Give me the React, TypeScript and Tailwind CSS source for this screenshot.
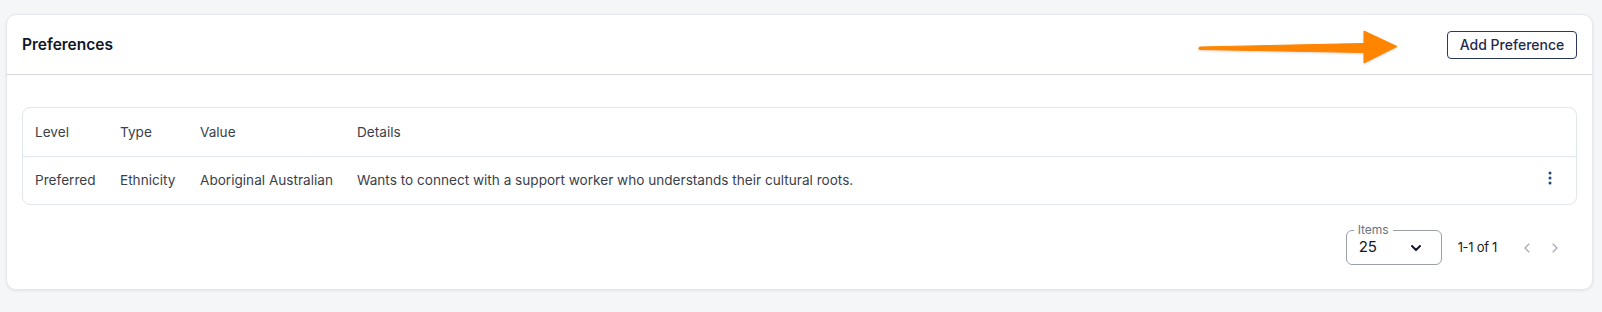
import { ChevronDown, ChevronLeft, ChevronRight } from "lucide-react";

const rows = [
  {
    level: "Preferred",
    type: "Ethnicity",
    value: "Aboriginal Australian",
    details: "Wants to connect with a support worker who understands their cultural roots.",
  },
];

function KebabIcon() {
  return (
    <svg width="4" height="14" viewBox="0 0 4 14" className="text-[#1d4a78]">
      <circle cx="2" cy="2" r="1.5" fill="currentColor" />
      <circle cx="2" cy="7" r="1.5" fill="currentColor" />
      <circle cx="2" cy="12" r="1.5" fill="currentColor" />
    </svg>
  );
}

function Arrow() {
  return (
    <svg
      width="204"
      height="38"
      viewBox="0 0 204 38"
      className="absolute left-[1190px] top-[14px] drop-shadow-[0_1px_1px_rgba(0,0,0,0.15)]"
    >
      <path
        d="M3 20.5 C1.5 20.5 1.5 18 3 18 L167 14.5 L167 2 L200 17.5 L167 34 L167 23.5 Z"
        fill="#ff8500"
        strokeLinejoin="round"
        stroke="#ff8500"
        strokeWidth="1"
      />
    </svg>
  );
}

export default function App() {
  return (
    <div className="w-full h-[312px] bg-[#f5f6f8] pt-[14px] pl-[6px] font-['Inter',sans-serif]">
      <div className="relative w-[1587px] h-[276px] bg-white rounded-[10px] border border-[#e4e7ec] shadow-[0_1px_3px_rgba(16,24,40,0.08)] flex flex-col">
        <div className="h-[60px] flex items-center justify-between pl-[15px] pr-[15px] border-b border-[#d4d7de]">
          <h2 className="text-[15.5px] font-semibold text-[#111827] pt-[1px]">Preferences</h2>
          <button className="h-[28px] w-[130px] rounded-[4px] border border-[#2b3a5c] text-[14px] font-medium text-[#1f2b4d] bg-white">
            Add Preference
          </button>
        </div>
        <Arrow />
        <div className="px-[15px] pt-[32px]">
          <div className="rounded-lg border border-[#e2e6ee] overflow-hidden">
            <table className="w-full table-fixed text-[13.6px] text-[#3a3f4a] border-collapse">
              <thead>
                <tr className="h-[48px] border-b border-[#e2e6ee]">
                  <th className="w-[85px] pl-3 text-left font-normal">Level</th>
                  <th className="w-[80px] pl-3 text-left font-normal">Type</th>
                  <th className="w-[157px] pl-3 text-left font-normal">Value</th>
                  <th className="pl-3 text-left font-normal">Details</th>
                  <th className="w-[60px]" />
                </tr>
              </thead>
              <tbody>
                {rows.map((r) => (
                  <tr key={r.value} className="h-[48px]">
                    <td className="pl-3">{r.level}</td>
                    <td className="pl-3">{r.type}</td>
                    <td className="pl-3">{r.value}</td>
                    <td className="pl-3">{r.details}</td>
                    <td className="pr-[24px] text-right">
                      <span className="inline-flex items-center justify-center">
                        <KebabIcon />
                      </span>
                    </td>
                  </tr>
                ))}
              </tbody>
            </table>
          </div>
          <div className="flex items-center justify-end mt-[25px] pr-[8px]">
            <div className="relative w-[96px] h-[35px] rounded-md border border-[#9aa0aa] flex items-center justify-between pl-[12px] pr-[17px]">
              <span className="absolute -top-[9px] left-[7px] px-[4px] bg-white text-[12px] leading-[16px] text-[#6b7280]">
                Items
              </span>
              <span className="text-[15px] text-[#111827]">25</span>
              <ChevronDown size={16} strokeWidth={3} className="text-[#111827]" />
            </div>
            <span className="ml-[16px] text-[13px] text-[#222] tracking-[-0.3px]">1-1 of 1</span>
            <div className="ml-[16px] flex items-center">
              <button className="w-[28px] h-[28px] flex items-center justify-center text-[#a3a8b3]">
                <ChevronLeft size={16} strokeWidth={1.75} />
              </button>
              <button className="w-[28px] h-[28px] flex items-center justify-center text-[#a3a8b3]">
                <ChevronRight size={16} strokeWidth={1.75} />
              </button>
            </div>
          </div>
        </div>
      </div>
    </div>
  );
}
